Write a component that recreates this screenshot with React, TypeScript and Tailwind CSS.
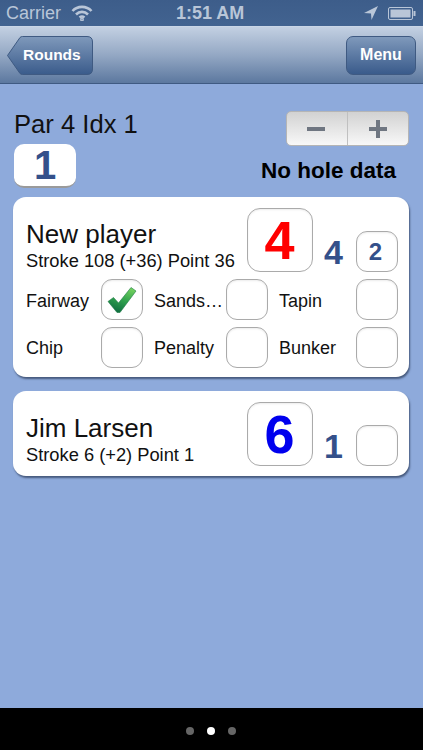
const font = { fontFamily: '"Liberation Sans", Arial, sans-serif' };

// Plain rounded box used for scores and the option toggles
function Box({ className = "", children }: { className?: string; children?: React.ReactNode }) {
  return (
    <div
      className={`flex items-center justify-center shrink-0 bg-white border border-[#aaaaaa] shadow-[inset_0_1px_2px_rgba(0,0,0,0.08)] ${className}`}
    >
      {children}
    </div>
  );
}

function Check() {
  return (
    <svg width="30" height="28" viewBox="0 0 30 28">
      <defs>
        <linearGradient id="chk" x1="0.7" y1="0" x2="0.3" y2="1">
          <stop offset="0" stopColor="#72d05e" />
          <stop offset="0.5" stopColor="#2fa14d" />
          <stop offset="1" stopColor="#0d6b3f" />
        </linearGradient>
      </defs>
      <path
        d="M1 15.5 L6.5 11.5 L11.5 17 L24 1.5 L29 5 L13 26.5 L10 26.5 Z"
        fill="url(#chk)"
        stroke="#1c7a44"
        strokeWidth="0.6"
        strokeLinejoin="round"
      />
    </svg>
  );
}

function Option({ label, labelClass, checked }: { label: string; labelClass: string; checked?: boolean }) {
  return (
    <div className="flex items-center">
      <span className={`${labelClass} text-[18px] text-[#111] whitespace-nowrap`}>{label}</span>
      <Box className="w-[42px] h-[41px] rounded-[11px]">{checked && <Check />}</Box>
    </div>
  );
}

function Player({
  name,
  detail,
  score,
  scoreColor,
  count,
  extra,
  children,
}: {
  name: string;
  detail: string;
  score: string;
  scoreColor: string;
  count: string;
  extra?: string;
  children?: React.ReactNode;
}) {
  return (
    <div className="ml-[13px] mr-[14px] bg-white rounded-[13px] pt-[11px] pb-[10px] pl-[13px] pr-[11px] shadow-[1px_2px_2px_rgba(40,55,85,0.7)]">
      <div className="flex items-end">
        <div className="flex-1 flex flex-col mb-[-1px]">
          <span className="text-[26px] leading-[30px] text-[#111]">{name}</span>
          <span className="text-[18.3px] leading-[24px] text-[#111] whitespace-nowrap">{detail}</span>
        </div>
        <Box className="w-[66px] h-[64px] rounded-[13px]">
          <span className="pr-[1px] text-[54px] font-bold leading-none" style={{ color: scoreColor }}>
            {score}
          </span>
        </Box>
        <span className="w-[43px] pr-[2px] text-center text-[34px] leading-[40px] font-bold text-[#34508a]">{count}</span>
        <Box className="w-[42px] h-[41px] rounded-[11px]">
          {extra && <span className="pr-[3px] text-[24px] font-bold text-[#34508a]">{extra}</span>}
        </Box>
      </div>
      {children}
    </div>
  );
}

export default function App() {
  return (
    <div style={font} className="w-[423px] h-[750px] flex flex-col overflow-hidden bg-[#8eaadb]">
      {/* status bar */}
      <div className="h-[26px] flex items-center px-[6px] bg-gradient-to-b from-[#3d5d8a] to-[#426390] text-[#b9c6d8] relative">
        <span className="text-[18px]">Carrier</span>
        <svg className="ml-[10px]" width="22" height="16" viewBox="0 0 22 16" fill="none" stroke="#b9c6d8" strokeWidth="2.6">
          <path d="M1.5 6 C6.5 0.5 15.5 0.5 20.5 6" />
          <path d="M5 9.5 C8.5 6 13.5 6 17 9.5" />
          <path d="M8.5 12.5 C10 11.3 12 11.3 13.5 12.5" />
          <circle cx="11" cy="14.5" r="0.6" fill="#b9c6d8" />
        </svg>
        <span className="absolute left-[176px] text-[18px] font-bold">1:51 AM</span>
        <svg className="ml-auto" width="16" height="16" viewBox="0 0 16 16">
          <path d="M15 1 L1 8 L8 8.5 L8.5 15 Z" fill="#b9c6d8" />
        </svg>
        <svg className="ml-[9px] mr-[1px]" width="28" height="13" viewBox="0 0 28 13">
          <rect x="0.5" y="0.5" width="24" height="12" rx="1.5" fill="none" stroke="#b9c6d8" />
          <rect x="2.5" y="2.5" width="20" height="8" fill="#b9c6d8" />
          <rect x="25.5" y="4" width="2" height="5" fill="#b9c6d8" />
        </svg>
      </div>

      {/* nav bar */}
      <div className="h-[58px] flex items-center justify-between pl-[7px] pr-[7px] border-t border-[#c9d5e6] border-b border-b-[#3f5a82] bg-gradient-to-b from-[#c3d0e2] via-[#94a8c4] to-[#5c789f]">
        <div className="relative w-[86px] h-[39px] flex items-center">
          <svg className="absolute inset-0" width="86" height="39" viewBox="0 0 86 39">
            <defs>
              <linearGradient id="btn" x1="0" y1="0" x2="0" y2="1">
                <stop offset="0" stopColor="#7f99bb" />
                <stop offset="1" stopColor="#3a5b8b" />
              </linearGradient>
            </defs>
            <path
              d="M0.5 19.5 L13 1.5 Q14 0.5 15.5 0.5 L80 0.5 Q85.5 0.5 85.5 6 L85.5 33 Q85.5 38.5 80 38.5 L15.5 38.5 Q14 38.5 13 37.5 Z"
              fill="url(#btn)"
              stroke="#3f5a82"
            />
          </svg>
          <span className="relative ml-[16px] text-[15.5px] font-bold text-white">Rounds</span>
        </div>
        <div className="w-[70px] h-[39px] flex items-center justify-center rounded-[7px] border border-[#3f5a82] bg-gradient-to-b from-[#7f99bb] to-[#3a5b8b] text-[16px] font-bold text-white">
          Menu
        </div>
      </div>

      {/* hole header */}
      <div className="flex justify-between pl-[14px] pr-[14px] pt-[26px]">
        <div className="flex flex-col">
          <span className="text-[25.6px] leading-[28px] text-[#111] mb-[6px] whitespace-nowrap">Par 4 Idx 1</span>
          <div className="w-[62px] h-[44px] flex items-center justify-center rounded-[10px] bg-white border-b-2 border-[#9a9a9a]">
            <span className="text-[40px] font-bold leading-none text-[#34508a]">1</span>
          </div>
        </div>
        <div className="flex flex-col items-end">
          <div className="w-[123px] h-[35px] mt-px flex rounded-[5px] border border-[#b5b5b5] bg-gradient-to-b from-[#d2d2d2] to-[#f8f8f8]">
            <div className="w-[61px] flex items-center justify-center pr-[2px] border-r border-[#c0c0c0]">
              <div className="w-[18px] h-[4px] bg-[#6f7681]" />
            </div>
            <div className="flex-1 relative flex items-center justify-center">
              <div className="w-[18px] h-[4px] bg-[#6f7681]" />
              <div className="absolute w-[4px] h-[18px] bg-[#6f7681]" />
            </div>
          </div>
          <span className="mt-[12px] mr-[13px] text-[22.5px] leading-[26px] font-bold text-black whitespace-nowrap">No hole data</span>
        </div>
      </div>

      {/* players */}
      <div className="mt-[9px] flex flex-col gap-[14px]">
        <Player name="New player" detail="Stroke 108 (+36) Point 36" score="4" scoreColor="#ff0000" count="4" extra="2">
          <div className="mt-[7px] mb-[-1px] flex flex-col gap-[7px]">
            <div className="flex justify-between">
              <Option label="Fairway" labelClass="w-[75px] pt-[4px]" checked />
              <Option label="Sands…" labelClass="w-[72px] pt-[4px]" />
              <Option label="Tapin" labelClass="w-[77px] pt-[4px]" />
            </div>
            <div className="flex justify-between">
              <Option label="Chip" labelClass="w-[75px] pt-[1px]" />
              <Option label="Penalty" labelClass="w-[72px] pt-[1px]" />
              <Option label="Bunker" labelClass="w-[77px] pt-[1px]" />
            </div>
          </div>
        </Player>
        <Player name="Jim Larsen" detail="Stroke 6 (+2) Point 1" score="6" scoreColor="#0000ee" count="1" />
      </div>

      {/* page dots */}
      <div className="mt-auto h-[42px] bg-black flex items-center justify-center gap-[13px] pt-[4px] pr-[2px]">
        <div className="w-[8px] h-[8px] rounded-full bg-[#666666]" />
        <div className="w-[8px] h-[8px] rounded-full bg-white" />
        <div className="w-[8px] h-[8px] rounded-full bg-[#666666]" />
      </div>
    </div>
  );
}
